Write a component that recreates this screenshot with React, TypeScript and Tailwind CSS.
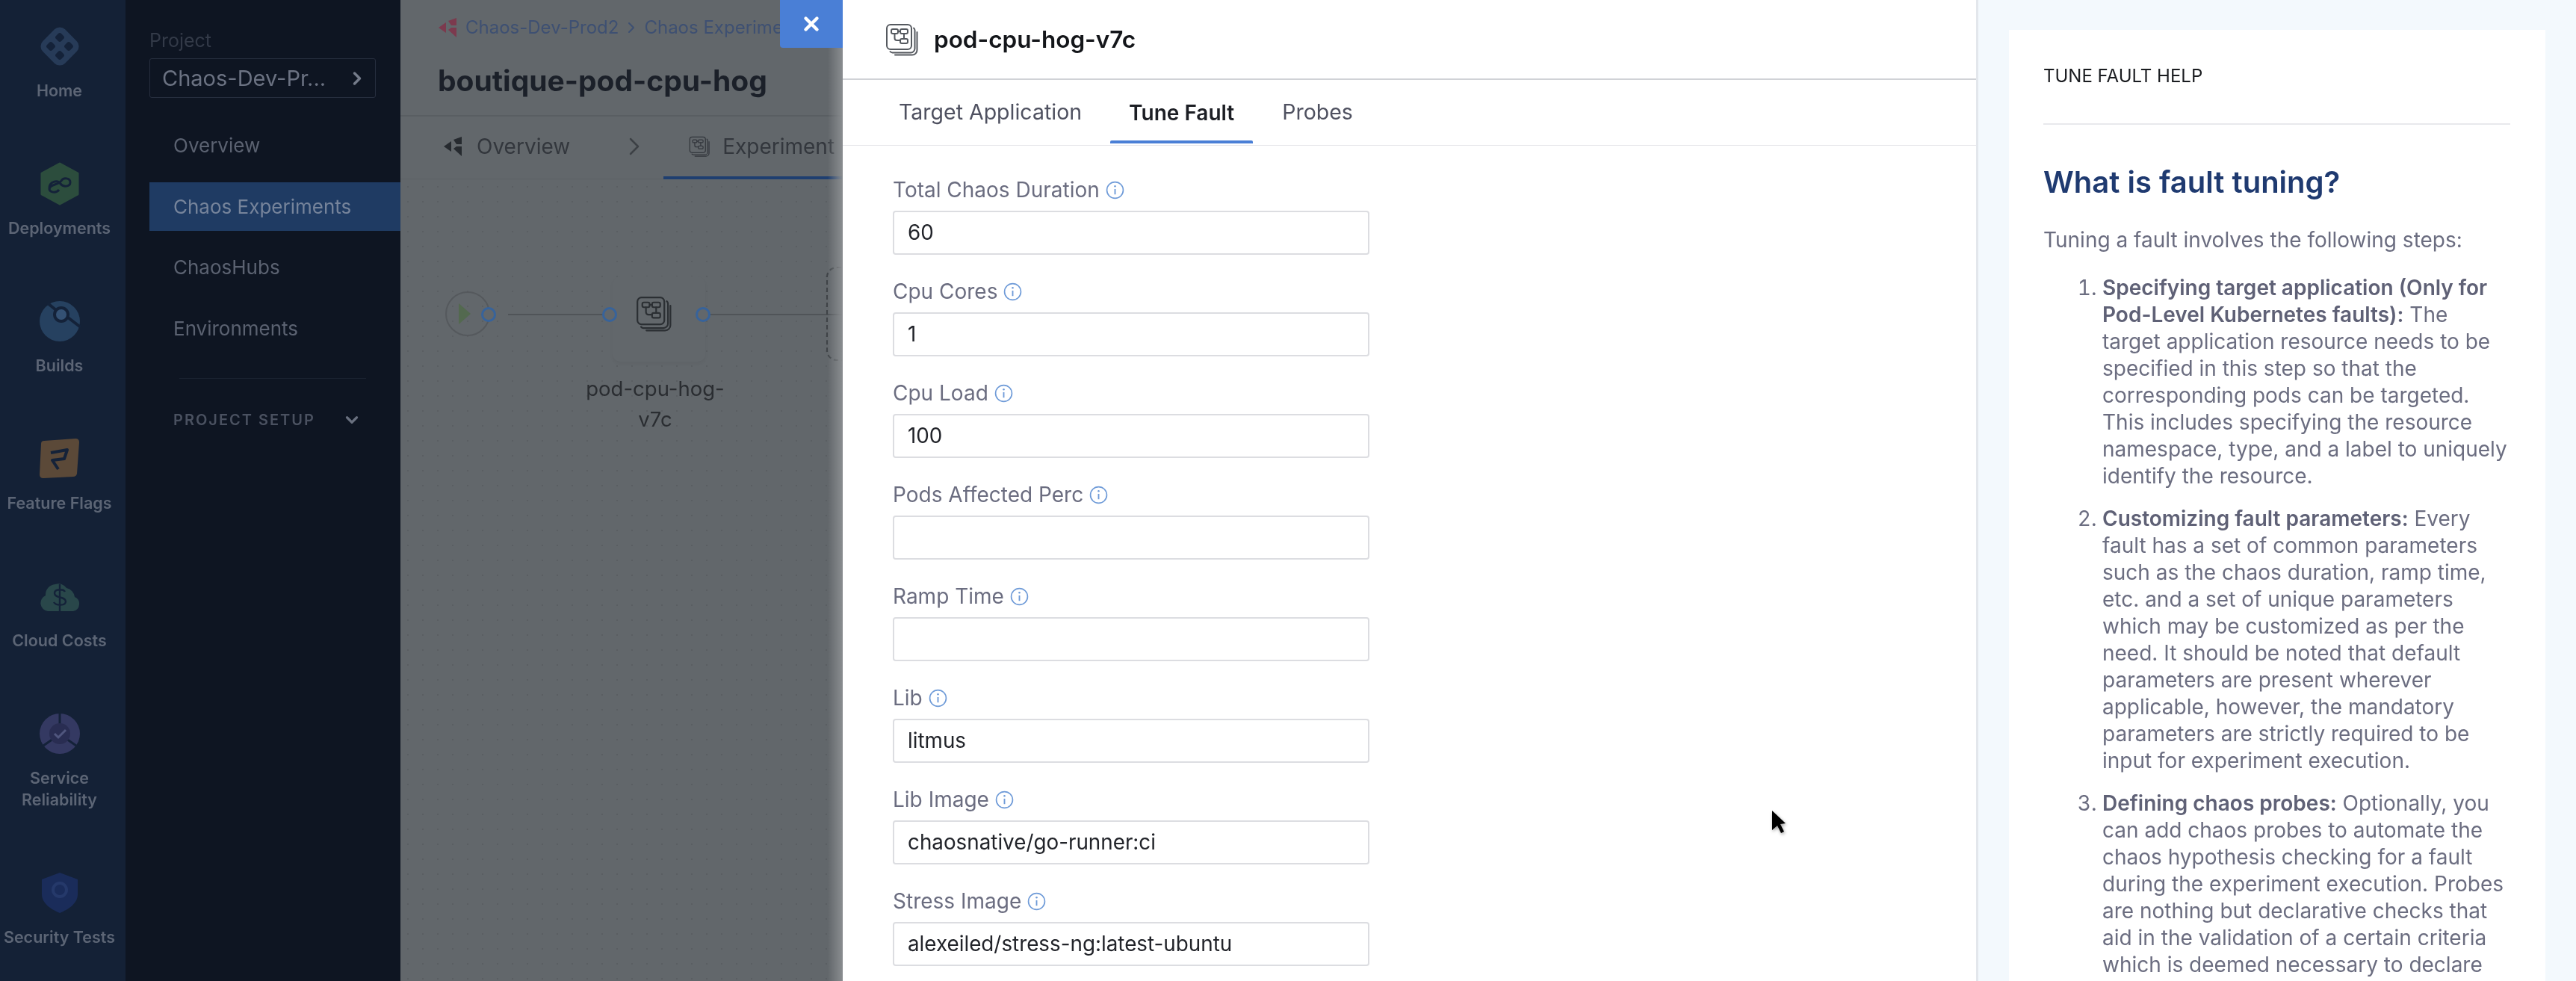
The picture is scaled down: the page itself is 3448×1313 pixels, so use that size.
import { X, ChevronRight, ChevronDown } from "lucide-react";

function FaultIcon({ className, color }: { className: string; color: string }) {
    return (
        <svg viewBox="0 0 44 44" fill="none" stroke={color} strokeWidth="2" strokeLinecap="round" strokeLinejoin="round" className={className}>
            <rect x="2" y="2" width="33" height="33" rx="5" />
            <path d="M38 6.5a4 4 0 0 1 1.5 3V34a5.5 5.5 0 0 1-5.5 5.5H9.5a4 4 0 0 1-3-1.500" />
            <path d="M42.500 12V36a6.500 6.500 0 0 1-6.500 6.500H13" />
            <rect x="8" y="8" width="9" height="6" rx="2" />
            <rect x="20" y="8" width="10" height="6" rx="2" />
            <rect x="20" y="21" width="10" height="6" rx="2" />
            <path d="M17 11h3M12.500 14v6a3 3 0 0 0 3 3H20M25 14v7" />
        </svg>
    );
}

function ChaosLogo({ className, color, accent }: { className: string; color: string; accent: string }) {
    return (
        <svg viewBox="0 0 26 28" className={className}>
            <path d="M1 14 L11 7 L11 21 Z" fill={color} />
            <path d="M14 5 L25 1 L25 11 L18 11 Z" fill={color} />
            <path d="M14 17 L18 14 L25 14 L25 27 Z" fill={accent} />
        </svg>
    );
}

function InfoIcon() {
    return (
        <svg viewBox="0 0 24 24" fill="none" className="w-[25px] h-[25px] shrink-0">
            <circle cx="12" cy="12" r="10.500" stroke="#6f9bd8" strokeWidth="1.600" />
            <path d="M12 10.500v7" stroke="#6f9bd8" strokeWidth="1.800" />
            <circle cx="12" cy="7" r="1.200" fill="#6f9bd8" />
        </svg>
    );
}

const railIcons: Record<string, React.ReactNode> = {
    Home: (
        <svg viewBox="0 0 60 60" className="w-[60px] h-[60px]">
            <rect x="9" y="9" width="42" height="42" rx="10" transform="rotate(45 30 30)" fill="#2c4261" />
            <g fill="#15233a">
                <rect x="25" y="13" width="10" height="10" rx="3" transform="rotate(45 30 18)" />
                <rect x="25" y="37" width="10" height="10" rx="3" transform="rotate(45 30 42)" />
                <rect x="13" y="25" width="10" height="10" rx="3" transform="rotate(45 18 30)" />
                <rect x="37" y="25" width="10" height="10" rx="3" transform="rotate(45 42 30)" />
            </g>
        </svg>
    ),
    Deployments: (
        <svg viewBox="0 0 60 60" className="w-[60px] h-[60px]">
            <path d="M30 3 L54 16 V44 L30 57 L6 44 V16 Z" fill="#33593f" stroke="#33593f" strokeWidth="3" strokeLinejoin="round" />
            <path d="M16 38c0-8 12-6 16-12 3-5 12-4 12 2s-9 7-13 2c-4-6-15-3-15 6 0 6 9 7 13 2" fill="none" stroke="#15233a" strokeWidth="3" />
        </svg>
    ),
    Builds: (
        <svg viewBox="0 0 60 60" className="w-[60px] h-[60px]">
            <circle cx="30" cy="30" r="27" fill="#2b4a6b" />
            <circle cx="32" cy="21" r="9" fill="#3d5e84" stroke="#15233a" strokeWidth="4" />
            <path d="M14 6 L25 15 M41 25 L58 38" stroke="#15233a" strokeWidth="4" />
        </svg>
    ),
    "Feature Flags": (
        <svg viewBox="0 0 60 60" className="w-[60px] h-[60px]">
            <path d="M9 6 L51 3 Q56 3 56 8 L53 50 Q52 54 48 54 L8 56 Q3 56 3 51 L5 10 Q5 6 9 6 Z" fill="#6d5339" />
            <path d="M18 22 L40 18 L36 30 L20 32 L28 44" fill="none" stroke="#15233a" strokeWidth="4" strokeLinejoin="round" />
        </svg>
    ),
    "Cloud Costs": (
        <svg viewBox="0 0 60 60" className="w-[60px] h-[60px]">
            <path d="M14 50a11 11 0 0 1-3-21 14 14 0 0 1 13-15 13 13 0 0 1 15 5 14 14 0 0 1 11 12 10 10 0 0 1-2 19 Z" fill="#2f5150" />
            <path d="M37 24c-2-4-14-4-14 2 0 7 15 4 15 11 0 6-13 6-16 1M30 14v36" fill="none" stroke="#15233a" strokeWidth="2.400" />
        </svg>
    ),
    "Service Reliability": (
        <svg viewBox="0 0 60 60" className="w-[60px] h-[60px]">
            <circle cx="30" cy="30" r="27" fill="#3d3f6d" />
            <path d="M30 3v14M8 46l13-9M52 46l-13-9" stroke="#15233a" strokeWidth="3" />
            <circle cx="30" cy="30" r="14" fill="#2f3159" />
            <path d="M23 30l5 5 10-10" fill="none" stroke="#5f6491" strokeWidth="3" />
        </svg>
    ),
    "Security Tests": (
        <svg viewBox="0 0 60 60" className="w-[60px] h-[60px]">
            <path d="M30 3 L54 12 V32 C54 44 42 52 30 57 C18 52 6 44 6 32 V12 Z" fill="#1c2f63" />
            <circle cx="30" cy="26" r="9" fill="none" stroke="#2a3f78" strokeWidth="4" />
        </svg>
    ),
};

const railItems = ["Home", "Deployments", "Builds", "Feature Flags", "Cloud Costs", "Service Reliability", "Security Tests"];
const navItems = ["Overview", "Chaos Experiments", "ChaosHubs", "Environments"];
const fields = [
    { label: "Total Chaos Duration", value: "60" },
    { label: "Cpu Cores", value: "1" },
    { label: "Cpu Load", value: "100" },
    { label: "Pods Affected Perc", value: "" },
    { label: "Ramp Time", value: "" },
    { label: "Lib", value: "litmus" },
    { label: "Lib Image", value: "chaosnative/go-runner:ci" },
    { label: "Stress Image", value: "alexeiled/stress-ng:latest-ubuntu" },
];

function Ring({ className }: { className: string }) {
    return <div className={`absolute top-[171px] w-[20px] h-[20px] rounded-full border-[3px] border-[#37639b] bg-[#62676b] ${className}`} />;
}

export default function App() {
    return (
        <div className="relative flex h-[1313px] w-[3448px] overflow-hidden bg-white blur-[0.6px] [font-family:Inter,sans-serif]">
            {/* Icon rail */}
            <aside className="w-[168px] shrink-0 bg-[#142136] pt-[32px] pr-[9px] flex flex-col items-center gap-[80px]">
                {railItems.map(name => (
                    <div key={name} className="flex flex-col items-center w-full">
                        <div className="opacity-80">{railIcons[name]}</div>
                        <span className="mt-[15px] text-center text-[21.500px] leading-[29px] font-semibold text-[#5c6575] whitespace-pre-line">
                            {name === "Service Reliability" ? "Service\nReliability" : name}
                        </span>
                    </div>
                ))}
            </aside>

            {/* Project nav */}
            <nav className="w-[368px] shrink-0 bg-[#0e1522] pt-[40px] pl-[32px]">
                <p className="text-[25px] leading-[28px] text-[#333a48]">Project</p>
                <div className="mt-[10px] h-[53px] w-[303px] rounded-[3px] border border-[#262e3e] flex items-center justify-between pl-[16px] pr-[10px]">
                    <span className="text-[29px] text-[#6b7282]">Chaos-Dev-Pr...</span>
                    <ChevronRight className="w-[28px] h-[28px] text-[#747b8a]" strokeWidth={3} />
                </div>
                <ul className="mt-[31px] flex flex-col gap-[16.5px]">
                    {navItems.map(item => (
                        <li
                            key={item}
                            className={`h-[65px] pl-[32px] flex items-center text-[26px] ${item === "Chaos Experiments" ? "bg-[#1f3b63] text-[#76849b]" : "text-[#5b6271]"}`}
                        >
                            {item}
                        </li>
                    ))}
                </ul>
                <div className="mt-[34px] ml-[40px] w-[250px] border-t border-[#1a2230]" />
                <div className="mt-[40px] ml-[32px] w-[258px] h-[30px] flex items-center justify-between">
                    <span className="text-[20px] font-semibold tracking-[0.1em] text-[#4a5160]">PROJECT SETUP</span>
                    <ChevronDown className="w-[26px] h-[26px] text-[#69707f] -translate-x-[6px]" strokeWidth={3} />
                </div>
            </nav>

            {/* Dimmed experiment page */}
            <main className="relative w-[592px] shrink-0 bg-[#62676b] flex flex-col overflow-hidden">
                <header className="h-[156px] border-b-2 border-[#595e62] pl-[50px]">
                    <div className="h-[74px] flex items-center whitespace-nowrap text-[24px] text-[#3e5072]">
                        <ChaosLogo className="w-[26px] h-[28px] mr-[11px]" color="#7c3a4e" accent="#7c3a4e" />
                        <span>Chaos-Dev-Prod2</span>
                        <ChevronRight className="w-[24px] h-[24px] mx-[5px]" strokeWidth={2} />
                        <span>Chaos Experiments</span>
                    </div>
                    <h1 className="mt-[11px] text-[39px] leading-[46px] font-bold text-[#1b2029] whitespace-nowrap">boutique-pod-cpu-hog</h1>
                </header>
                <div className="relative h-[84px] flex items-center pl-[57px] pb-[4px] text-[#33373d] text-[28px] whitespace-nowrap border-b border-[#5c6165]">
                    <ChaosLogo className="w-[26px] h-[28px]" color="#262a2f" accent="#262a2f" />
                    <span className="ml-[19px]">Overview</span>
                    <ChevronRight className="w-[40px] h-[40px] ml-[66px] text-[#3d4146]" strokeWidth={1.500} />
                    <FaultIcon className="w-[28px] h-[28px] ml-[53px]" color="#33373d" />
                    <span className="ml-[17px]">Experiment</span>
                    <div className="absolute left-[352px] right-0 bottom-[-1px] h-[4px] bg-[#1f3f70]" />
                </div>
                <div className="relative flex-1 bg-[radial-gradient(#5a5e62_1.500px,transparent_1.500px)] bg-[length:20px_20px]">
                    <div className="absolute left-[144px] top-[180px] w-[480px] h-[2px] bg-[#505458]" />
                    <div className="absolute left-[60px] top-[150px] w-[60px] h-[60px] rounded-full border-2 border-[#55595d]" />
                    <div className="absolute left-[78px] top-[166px] w-0 h-0 border-y-[14px] border-y-transparent border-l-[16px] border-l-[#53694f]" />
                    <div className="absolute left-[284px] top-[130px] w-[124px] h-[114px] rounded-[10px] bg-[#62676b] shadow-[0_3px_4px_rgba(0,0,0,0.04)]" />
                    <Ring className="left-[108px]" />
                    <Ring className="left-[270px]" />
                    <Ring className="left-[395px]" />
                    <FaultIcon className="absolute left-[315px] top-[156px] w-[48px] h-[48px]" color="#2b2f33" />
                    <p className="absolute left-[231px] top-[260px] w-[220px] text-center text-[27.500px] leading-[41px] text-[#2a2d31]">pod-cpu-hog-<br />v7c</p>
                    <div className="absolute left-[570px] top-[117px] w-[100px] h-[126px] rounded-[14px] border-2 border-dashed border-[#3f4347]" />
                </div>
                <div className="absolute right-0 top-0 bottom-0 w-[20px] bg-gradient-to-r from-transparent to-[#8a8d90]" />
            </main>

            {/* Fault drawer */}
            <section className="w-[1520px] shrink-0 bg-white flex flex-col border-r-[3px] border-[#e3e7ec]">
                <div className="h-[107px] flex items-center pl-[57px] border-b-[2px] border-[#d0d2d6]">
                    <FaultIcon className="w-[44px] h-[44px]" color="#55595f" />
                    <h2 className="ml-[21px] text-[31.500px] font-semibold text-[#14161a]">pod-cpu-hog-v7c</h2>
                </div>
                <div className="h-[88px] flex items-center pl-[75px] border-b border-[#e4e5e8] text-[28.500px]">
                    <span className="text-[#4f5160]">Target Application</span>
                    <div className="relative ml-[63px] font-semibold text-[#1c1e24] text-[28px]">
                        Tune Fault
                        <div className="absolute left-[-25px] right-[-25px] top-[58px] h-[4px] rounded-t-[2px] bg-[#4a7fd6]" />
                    </div>
                    <span className="ml-[64px] text-[#4f5160]">Probes</span>
                </div>
                <form className="pl-[67px] pt-[41px] flex flex-col gap-[31px]">
                    {fields.map(f => (
                        <div key={f.label} className="flex flex-col w-[638px]">
                            <label className="h-[36px] flex items-center gap-[8px] text-[28px] text-[#6b6d80]">
                                {f.label}
                                <InfoIcon />
                            </label>
                            <div className="mt-[10px] h-[59px] rounded-[4px] border-2 border-[#dcdde1] flex items-center pl-[18px] text-[27.800px] text-[#22242a]">
                                {f.value}
                            </div>
                        </div>
                    ))}
                </form>
            </section>

            {/* Help panel */}
            <aside className="flex-1 bg-[#f3f9fd] pt-[40px] pl-[41px] pr-[41px]">
                <div className="h-full bg-white pl-[46px] pr-[47px] pt-[46px]">
                    <p className="text-[24px] leading-[32px] text-[#1a1c20]">TUNE FAULT HELP</p>
                    <div className="mt-[47px] border-t-2 border-[#e8e9ec]" />
                    <h3 className="mt-[50px] text-[40px] leading-[54px] font-semibold text-[#1f3a70]">What is fault tuning?</h3>
                    <p className="mt-[32px] text-[28px] leading-[36px] text-[#6b6d80]">Tuning a fault involves the following steps:</p>
                    <ol className="mt-[28px] ml-[79px] list-decimal text-[28px] leading-[36px] text-[#6b6d80] flex flex-col gap-[21px]">
                        <li>
                            <b className="font-semibold text-[#5f6176]">Specifying target application (Only for Pod-Level Kubernetes faults):</b> The target application resource needs to be specified in this step so that the corresponding pods can be targeted. This includes specifying the resource namespace, type, and a label to uniquely identify the resource.
                        </li>
                        <li>
                            <b className="font-semibold text-[#5f6176]">Customizing fault parameters:</b> Every fault has a set of common parameters such as the chaos duration, ramp time, etc. and a set of unique parameters which may be customized as per the need. It should be noted that default parameters are present wherever applicable, however, the mandatory parameters are strictly required to be input for experiment execution.
                        </li>
                        <li>
                            <b className="font-semibold text-[#5f6176]">Defining chaos probes:</b> Optionally, you can add chaos probes to automate the chaos hypothesis checking for a fault during the experiment execution. Probes are nothing but declarative checks that aid in the validation of a certain criteria which is deemed necessary to declare
                        </li>
                    </ol>
                </div>
            </aside>

            {/* Drawer close button */}
            <button className="absolute left-[1044px] top-0 w-[84px] h-[64px] rounded-bl-[4px] bg-[#4a7fd6] flex items-center justify-center">
                <X className="w-[30px] h-[30px] text-white" strokeWidth={3.500} />
            </button>

            {/* Mouse pointer from the recording */}
            <svg viewBox="0 0 20 32" className="absolute left-[2371px] top-[1084px] w-[20px] h-[32px] drop-shadow-[1px_2px_2px_rgba(0,0,0,0.4)]">
                <path d="M1 1 L19 18 L12 19 L17 29 L13 31 L8 21 L1 27 Z" fill="#000" />
            </svg>
        </div>
    );
}
